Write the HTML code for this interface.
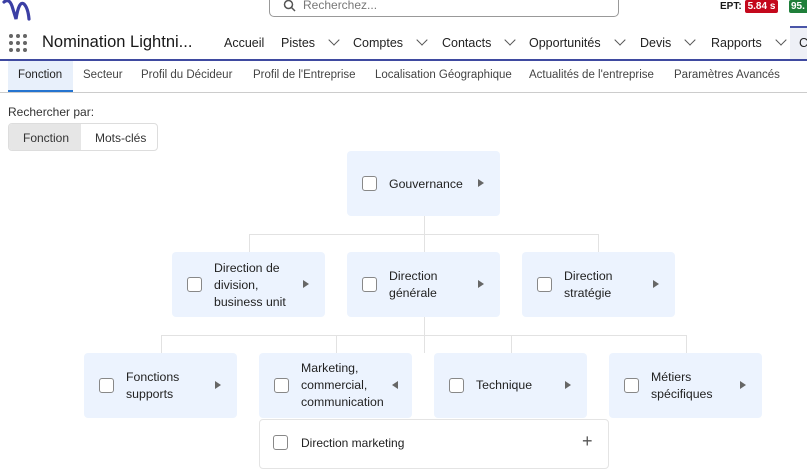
<!DOCTYPE html>
<html><head><meta charset="utf-8"><style>
*{box-sizing:border-box;margin:0;padding:0}
body{width:807px;height:457px;overflow:hidden;background:#fff;font-family:"Liberation Sans",sans-serif;color:#181818;position:relative}
.a{position:absolute}
.nav{font-size:12.5px;color:#222;top:36px}
.chev{display:inline-block;width:8px;height:8px;border-right:1.2px solid #555;border-bottom:1.2px solid #555;transform:rotate(45deg);margin-left:15px;position:relative;top:-3px}
.tab{top:69px;font-size:11.5px;color:#444}
.box{position:absolute;width:153px;height:65px;background:#ecf3fe;border-radius:4px}
.cb{position:absolute;left:15px;top:25px;width:15px;height:15px;border:1px solid #888;border-radius:3px;background:#fff}
.lbl{position:absolute;left:42px;font-size:12.3px;line-height:17px;color:#222}
.tri{position:absolute;right:16px;top:28px;width:0;height:0;border-left:6px solid #666;border-top:4.5px solid transparent;border-bottom:4.5px solid transparent}
.ln{position:absolute;background:#e2e2e2}
</style></head><body>
<svg class="a" style="left:2px;top:0" width="30" height="22" viewBox="0 0 30 22"><path d="M2 2 Q7 -2 10 6 L14 19 Q17 0 22 4 Q26 8 27 19" fill="none" stroke="#3b3fa4" stroke-width="3.2" stroke-linecap="round"/></svg>
<div class="a" style="left:269px;top:-8px;width:350px;height:25px;border:1px solid #999;border-radius:5px"></div>
<svg class="a" style="left:283px;top:-1px" width="14" height="14"><circle cx="5.5" cy="5.5" r="4" fill="none" stroke="#555" stroke-width="1.5"/><line x1="8.5" y1="8.5" x2="12" y2="12" stroke="#555" stroke-width="1.5"/></svg>
<div class="a" style="left:303px;top:-2px;font-size:12px;color:#777">Recherchez...</div>
<div class="a" style="left:720px;top:1px;font-size:10px;font-weight:bold">EPT:</div>
<div class="a" style="left:745px;top:0;width:33px;height:13px;background:#c4081c;color:#fff;font-size:10px;font-weight:bold;text-align:center;line-height:13px;border-radius:2px">5.84 s</div>
<div class="a" style="left:789px;top:0;width:20px;height:13px;background:#1f7f3a;color:#fff;font-size:10px;font-weight:bold;line-height:13px;padding-left:2px;border-radius:2px">95.</div>
<svg class="a" style="left:8px;top:33px" width="20" height="20"><g fill="#666"><circle cx="3" cy="3" r="2"/><circle cx="10" cy="3" r="2"/><circle cx="17" cy="3" r="2"/><circle cx="3" cy="10" r="2"/><circle cx="10" cy="10" r="2"/><circle cx="17" cy="10" r="2"/><circle cx="3" cy="17" r="2"/><circle cx="10" cy="17" r="2"/><circle cx="17" cy="17" r="2"/></g></svg>
<div class="a" style="left:42px;top:33px;font-size:16.5px;color:#181818">Nomination Lightni...</div>
<div class="a nav" style="left:224px">Accueil</div>
<div class="a nav" style="left:281px">Pistes<span class="chev"></span></div>
<div class="a nav" style="left:353px">Comptes<span class="chev"></span></div>
<div class="a nav" style="left:442px">Contacts<span class="chev"></span></div>
<div class="a nav" style="left:529px">Opportunités<span class="chev"></span></div>
<div class="a nav" style="left:640px">Devis<span class="chev"></span></div>
<div class="a nav" style="left:711px">Rapports<span class="chev"></span></div>
<div class="a" style="left:790px;top:26px;width:17px;height:33px;background:#eef0f6;border-top:2px solid #4a55a8"></div>
<div class="a nav" style="left:799px">C</div>
<div class="a" style="left:0;top:59px;width:807px;height:2px;background:#3f4aa0"></div>
<div class="a" style="left:8px;top:61px;width:65px;height:31px;background:#e8f0fb;border-bottom:2px solid #2574d0"></div>
<div class="a tab" style="left:18px;color:#222">Fonction</div>
<div class="a tab" style="left:83px">Secteur</div>
<div class="a tab" style="left:141px">Profil du Décideur</div>
<div class="a tab" style="left:253px">Profil de l'Entreprise</div>
<div class="a tab" style="left:375px">Localisation Géographique</div>
<div class="a tab" style="left:529px">Actualités de l'entreprise</div>
<div class="a tab" style="left:674px">Paramètres Avancés</div>
<div class="a" style="left:0;top:92px;width:807px;height:1px;background:#ccc"></div>
<div class="a" style="left:8px;top:105px;font-size:12px;color:#333">Rechercher par:</div>
<div class="a" style="left:8px;top:123px;width:150px;height:28px;border:1px solid #ddd;border-radius:4px;overflow:hidden">
<div class="a" style="left:0;top:0;width:72px;height:28px;background:#e6e6e6"></div>
<div class="a" style="left:14px;top:7px;font-size:12px;color:#333">Fonction</div>
<div class="a" style="left:86px;top:7px;font-size:12px;color:#333">Mots-clés</div></div>
<div class="ln" style="left:424px;top:216px;width:1px;height:36px"></div>
<div class="ln" style="left:249px;top:234px;width:350px;height:1px"></div>
<div class="ln" style="left:249px;top:234px;width:1px;height:18px"></div>
<div class="ln" style="left:598px;top:234px;width:1px;height:18px"></div>
<div class="ln" style="left:424px;top:317px;width:1px;height:36px"></div>
<div class="ln" style="left:161px;top:335px;width:526px;height:1px"></div>
<div class="ln" style="left:161px;top:335px;width:1px;height:18px"></div>
<div class="ln" style="left:336px;top:335px;width:1px;height:18px"></div>
<div class="ln" style="left:511px;top:335px;width:1px;height:18px"></div>
<div class="ln" style="left:686px;top:335px;width:1px;height:18px"></div>
<div class="box" style="left:347px;top:151px"><div class="cb"></div><div class="lbl" style="top:25px">Gouvernance</div><div class="tri"></div></div>
<div class="box" style="left:172px;top:252px"><div class="cb"></div><div class="lbl" style="top:8px">Direction de<br>division,<br>business unit</div><div class="tri"></div></div>
<div class="box" style="left:347px;top:252px"><div class="cb"></div><div class="lbl" style="top:16px">Direction<br>générale</div><div class="tri"></div></div>
<div class="box" style="left:522px;top:252px"><div class="cb"></div><div class="lbl" style="top:16px">Direction<br>stratégie</div><div class="tri"></div></div>
<div class="box" style="left:84px;top:353px"><div class="cb"></div><div class="lbl" style="top:16px">Fonctions<br>supports</div><div class="tri"></div></div>
<div class="box" style="left:259px;top:353px"><div class="cb"></div><div class="lbl" style="top:7px">Marketing,<br>commercial,<br>communication</div><div class="tri" style="border-left:none;border-right:6px solid #666;right:14px"></div></div>
<div class="box" style="left:434px;top:353px"><div class="cb"></div><div class="lbl" style="top:24px">Technique</div><div class="tri"></div></div>
<div class="box" style="left:609px;top:353px"><div class="cb"></div><div class="lbl" style="top:16px">Métiers<br>spécifiques</div><div class="tri"></div></div>
<div class="a" style="left:259px;top:419px;width:350px;height:50px;border:1px solid #e4e4e4;border-radius:4px;background:#fff"></div>
<div class="a" style="left:273px;top:435px;width:15px;height:15px;border:1px solid #888;border-radius:3px"></div>
<div class="a" style="left:301px;top:436px;font-size:12px;color:#222">Direction marketing</div>
<div class="a" style="left:582px;top:431px;font-size:18px;color:#555">+</div>
</body></html>
